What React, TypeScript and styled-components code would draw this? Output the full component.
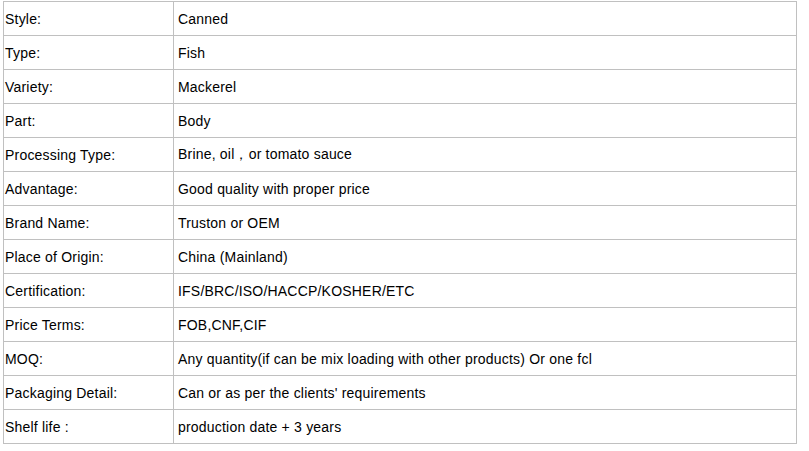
import styled, { createGlobalStyle } from 'styled-components';

const GlobalStyle = createGlobalStyle`
  html, body {
    margin: 0;
    padding: 0;
    background: #ffffff;
  }
`;

const Page = styled.div`
  padding: 1px 0 0 3px;
  font-family: 'Liberation Sans', Arial, sans-serif;
`;

const SpecTable = styled.table`
  width: 794px;
  border-collapse: collapse;
  border: 1px solid #c0c0c0;
  table-layout: fixed;
`;

const Row = styled.tr`
  height: 34px;
`;

const Cell = styled.td<{ isLabel?: boolean }>`
  border: 1px solid #c0c0c0;
  width: ${props => props.isLabel ? '168px' : 'auto'};
  padding: 0 0 0 ${props => props.isLabel ? '1px' : '4px'};
  font-size: 14px;
  letter-spacing: 0.2px;
  color: #000000;
  vertical-align: middle;
  white-space: nowrap;
`;

const specs: [string, string][] = [
  ['Style:', 'Canned'],
  ['Type:', 'Fish'],
  ['Variety:', 'Mackerel'],
  ['Part:', 'Body'],
  ['Processing Type:', 'Brine, oil，or tomato sauce'],
  ['Advantage:', 'Good quality with proper price'],
  ['Brand Name:', 'Truston or OEM'],
  ['Place of Origin:', 'China (Mainland)'],
  ['Certification:', 'IFS/BRC/ISO/HACCP/KOSHER/ETC'],
  ['Price Terms:', 'FOB,CNF,CIF'],
  ['MOQ:', 'Any quantity(if can be mix loading with other products) Or one fcl'],
  ['Packaging Detail:', "Can or as per the clients' requirements"],
  ['Shelf life :', 'production date + 3 years'],
];

const App: React.FC = () => {
  return (
    <Page>
      <GlobalStyle />
      <SpecTable>
        <tbody>
          {specs.map(([label, value]) => (
            <Row key={label}>
              <Cell isLabel>{label}</Cell>
              <Cell>{value}</Cell>
            </Row>
          ))}
        </tbody>
      </SpecTable>
    </Page>
  );
};

export default App;
